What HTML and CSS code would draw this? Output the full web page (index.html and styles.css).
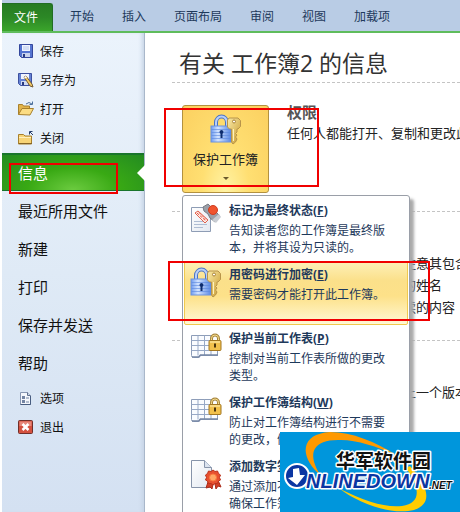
FILE: index.html
```html
<!DOCTYPE html>
<html lang="zh-CN">
<head>
    <meta charset="UTF-8">
    <meta name="viewport" content="width=device-width, initial-scale=1.0">
    <title>工作簿2</title>
    <link rel="stylesheet" href="styles.css">
</head>
<body>
    <!-- shared icons -->
    <svg class="defs" width="0" height="0" aria-hidden="true">
        <defs>
            <linearGradient id="lockBlue" x1="0" y1="0" x2="1" y2="0">
                <stop offset="0" stop-color="#6f9cf0"/>
                <stop offset="0.35" stop-color="#d3e4ff"/>
                <stop offset="1" stop-color="#5a88e4"/>
            </linearGradient>
            <linearGradient id="keyGold" x1="0" y1="0" x2="1" y2="1">
                <stop offset="0" stop-color="#f9eaa8"/>
                <stop offset="1" stop-color="#c99a2c"/>
            </linearGradient>
            <linearGradient id="paper" x1="0" y1="0" x2="1" y2="1">
                <stop offset="0" stop-color="#ffffff"/>
                <stop offset="1" stop-color="#e2e8f1"/>
            </linearGradient>
            <symbol id="lockKey" viewBox="0 0 32 32">
                <path d="M6 13V8.500a5.500 6 0 0 1 11 0V13" fill="none" stroke="#4a72c4" stroke-width="4"/>
                <path d="M6 13V8.500a5.500 6 0 0 1 11 0V13" fill="none" stroke="#b9d0f8" stroke-width="2"/>
                <rect x="1" y="12" width="20" height="16" fill="url(#lockBlue)" stroke="#6b92e0"/>
                <path d="M1.500 15.500h19M1.500 18.500h19M1.500 21.500h19M1.500 24.500h19" stroke="#5a87df" stroke-width="1" opacity="0.6"/>
                <path d="M11.500 16a2 2 0 0 1 1 3.700V24h-2v-4.300a2 2 0 0 1 1-3.700z" fill="#0d2c6e"/>
                <path d="M19 4h9l2.500 2.500v6L28 15h-1v3l-1.500 1.500L27 21l-1.500 2 1.500 2-1.500 3-2.500 2-1.500-2V15h-2L17.500 13V6z" fill="url(#keyGold)" stroke="#b8944a"/>
                <path d="M23.500 15v12" stroke="#fff3bd"/>
                <circle cx="24" cy="7.500" r="1.500" fill="#fff" stroke="#a98336"/>
            </symbol>
            <symbol id="sheetLock" viewBox="0 0 32 32">
                <path d="M1.500 4.500h26v20h-18l-1 2h-5a2 2 0 0 1-2-2z" fill="#fafcff" stroke="#8d9db8"/>
                <path d="M1.500 9.500h26M1.500 14.500h26M1.500 19.500h26M8 4.500v20M14.500 4.500v20M21 4.500v20" fill="none" stroke="#98a9c6"/>
                <path d="M2 26h7l1.500-2H28" fill="none" stroke="#7686a5" stroke-width="1.500"/>
                <path d="M21.500 11V7.500a3.500 3.500 0 0 1 7 0V11" fill="none" stroke="#a8873f" stroke-width="3"/>
                <path d="M21.500 11V7.500a3.500 3.500 0 0 1 7 0V11" fill="none" stroke="#f6dd8e" stroke-width="1"/>
                <rect x="19" y="9.500" width="12" height="10" rx="1" fill="#f2c14c" stroke="#a27621"/>
                <path d="M20 11h10" stroke="#fff0b6"/>
                <path d="M25 12.500v4" stroke="#4b350d" stroke-width="2"/>
            </symbol>
        </defs>
    </svg>

    <div class="window">
        <nav class="ribbon">
            <button class="tab file">文件</button>
            <button class="tab">开始</button>
            <button class="tab">插入</button>
            <button class="tab">页面布局</button>
            <button class="tab">审阅</button>
            <button class="tab">视图</button>
            <button class="tab">加载项</button>
        </nav>

        <div class="backstage">
            <nav class="sidebar">
                <button class="command">
                    <svg width="16" height="16" viewBox="0 0 16 16">
                        <path d="M1.500 1.500h13v13h-11l-2-2z" fill="#5474d0" stroke="#34479c"/>
                        <rect x="4" y="2" width="8" height="6" fill="#f0f5ff"/>
                        <path d="M5 4h6M5 6h6" stroke="#b6c7ea"/>
                        <rect x="4" y="10" width="8" height="4" fill="#c8d3ed"/>
                        <rect x="5" y="11" width="2" height="3" fill="#28397f"/>
                    </svg>
                    保存
                </button>
                <button class="command">
                    <svg width="16" height="16" viewBox="0 0 16 16">
                        <path d="M.5 1.500h13v12h-11l-2-2z" fill="#6583d5" stroke="#3d509f"/>
                        <rect x="3" y="2" width="8" height="5" fill="#f0f5ff"/>
                        <rect x="3" y="9" width="7" height="4" fill="#d0daf1"/>
                        <path d="M4 10h2v3H4z" fill="#28397f"/>
                        <path d="M6 5l2-1 6 8 1 3-3-1z" fill="#f3cb65" stroke="#745b36"/>
                        <path d="M6 5l2-1 1 1.500-2 1z" fill="#fff"/>
                    </svg>
                    另存为
                </button>
                <button class="command">
                    <svg width="16" height="16" viewBox="0 0 16 16">
                        <path d="M.5 13.500v-10h4l1 1.500h6v3" fill="#e2b44c" stroke="#a8802c"/>
                        <path d="M.5 13.500L4 7.500h11.500L12 14z" fill="#fbdc83" stroke="#a8802c"/>
                        <path d="M8 3q3-3 6 0M14.500 .5v3h-3" fill="none" stroke="#4c709c"/>
                    </svg>
                    打开
                </button>
                <button class="command">
                    <svg width="16" height="16" viewBox="0 0 16 16">
                        <path d="M.5 14V4.500h5L7 6h6.500v8z" fill="#f7d477" stroke="#a8802c"/>
                        <path d="M1 7.500h12" stroke="#fff0bd"/>
                        <path d="M1 13.500h13" stroke="#856426"/>
                        <path d="M15 5l-3-3M11.500 4.500V1.500h3" fill="none" stroke="#273f6b"/>
                    </svg>
                    关闭
                </button>

                <button class="page active">信息</button>
                <button class="page">最近所用文件</button>
                <button class="page">新建</button>
                <button class="page">打印</button>
                <button class="page">保存并发送</button>
                <button class="page last">帮助</button>

                <button class="command">
                    <svg width="16" height="16" viewBox="0 0 16 16">
                        <path d="M2.500 2.500h7l3 3v9h-10z" fill="#f4f7fc" stroke="#8796b2"/>
                        <path d="M9.500 2.500v3h3" fill="#cdd8e9" stroke="#60718f"/>
                        <path d="M12.500 6v8.500h-10" fill="none" stroke="#485d80"/>
                        <path d="M4 6h3v3H4zM4 10h3v3H4z" fill="#7384a3"/>
                        <path d="M8 8h3M8 12h3" stroke="#7384a3"/>
                    </svg>
                    选项
                </button>
                <button class="command">
                    <svg width="16" height="16" viewBox="0 0 16 16">
                        <rect x=".5" y="1.500" width="14" height="13" rx="1" fill="#d4513f" stroke="#702e29"/>
                        <path d="M1.500 7V2.500h12V7z" fill="#e78779"/>
                        <path d="M4.500 5l6 6M10.500 5l-6 6" stroke="#fff" stroke-width="2.500"/>
                    </svg>
                    退出
                </button>
            </nav>

            <main class="content">
                <h1>有关 工作簿2 的信息</h1>

                <section class="section">
                    <div class="protect">
                        <button class="protect-button">
                            <svg width="32" height="32"><use href="#lockKey"/></svg>
                            <span>保护工作簿</span>
                            <i class="arrow"></i>
                        </button>

                        <div class="menu">
                            <button class="item">
                                <svg width="32" height="32" viewBox="0 0 32 32">
                                    <path d="M1.500 4.500h19v24h-19z" fill="url(#paper)" stroke="#8e9db5"/>
                                    <path d="M4 18.500h13M4 21.500h13M4 24.500h9" stroke="#aebcd3"/>
                                    <path d="M13 4l5-3 12 12-5 6-5-4-2-4-4-3z" fill="#9a9fa8" stroke="#777b83"/>
                                    <path d="M22 17l7-6 2 3-5 6z" fill="#c9cdd3"/>
                                    <circle cx="23" cy="7" r="4.500" fill="#f0542e" stroke="#d03c20"/>
                                    <path d="M5 10l3-2 10 9-3 3z" fill="#fff0eb" stroke="#e0604c"/>
                                    <path d="M7 10l9 8M9 9.500l7 7" stroke="#e65441" stroke-dasharray="3 1"/>
                                </svg>
                                <span class="text">
                                    <strong>标记为最终状态(<u>F</u>)</strong>
                                    <span>告知读者您的工作簿是最终版本，并将其设为只读的。</span>
                                </span>
                            </button>
                            <button class="item selected">
                                <svg width="32" height="32"><use href="#lockKey"/></svg>
                                <span class="text">
                                    <strong>用密码进行加密(<u>E</u>)</strong>
                                    <span>需要密码才能打开此工作簿。</span>
                                </span>
                            </button>
                            <button class="item">
                                <svg width="32" height="32"><use href="#sheetLock"/></svg>
                                <span class="text">
                                    <strong>保护当前工作表(<u>P</u>)</strong>
                                    <span>控制对当前工作表所做的更改类型。</span>
                                </span>
                            </button>
                            <button class="item">
                                <svg width="32" height="32"><use href="#sheetLock"/></svg>
                                <span class="text">
                                    <strong>保护工作簿结构(<u>W</u>)</strong>
                                    <span>防止对工作簿结构进行不需要的更改，例</span>
                                </span>
                            </button>
                            <button class="item">
                                <svg width="32" height="32" viewBox="0 0 32 32">
                                    <path d="M1.500 1.500h13l7 7v20h-20z" fill="url(#paper)" stroke="#8794aa"/>
                                    <path d="M14.500 1.500v7h7" fill="#dbe3ef" stroke="#8794aa"/>
                                    <path d="M19 20l-3 9 4-1 2 2 2-9zM24 20l2 10 2-3 3 1-4-9z" fill="#d33e25" stroke="#a92b19"/>
                                    <path d="M23 11l2 1.500 2.500-.5 1 2.500 2 1.500-1 2.500 1 2.500-2 1-1 2.500h-2.500L23 26l-2-1.500h-2.500l-1-2.500-2-1 1-2.500-1-2.500 2-1.500 1-2.500 2.500.5z" fill="#e7502f" stroke="#bb321c"/>
                                    <circle cx="23" cy="18.500" r="3.500" fill="#ffa866" stroke="#fa793e"/>
                                </svg>
                                <span class="text">
                                    <strong>添加数字签</strong>
                                    <span>通过添加不<br>确保工作簿</span>
                                </span>
                            </button>
                        </div>
                    </div>
                    <div class="info">
                        <h2>权限</h2>
                        <p>任何人都能打开、复制和更改此</p>
                    </div>
                </section>

                <section class="section">
                    <div class="details">
                        <p>注意其包含</p>
                        <p>的姓名</p>
                        <p>读的内容</p>
                    </div>
                </section>

                <section class="section">
                    <div class="details">
                        <p>上一个版本</p>
                    </div>
                </section>
            </main>
        </div>

        <div class="mark mark-info"></div>
        <div class="mark mark-protect"></div>
        <div class="mark mark-encrypt"></div>

        <svg class="logo" width="180" height="80" viewBox="0 0 180 80" role="img" aria-label="华军软件园 ONLINEDOWN.NET">
            <rect width="180" height="80" fill="#0096dc"/>
            <path d="M38 41C20 24 20 2 50 0c22 0 46 10 66 23C96 14 74 7 58 8 34 8 27 20 39 41z" fill="#ff9900"/>
            <path d="M130 34c20 22 22 38 4 44-24 6-59-9-74-21 25 12 45 19 62 17 20-3 18-19 4-38z" fill="#ffcc00"/>
            <text class="logo-cn" x="56" y="36">华军软件园</text>
            <ellipse cx="17" cy="44" rx="12" ry="12" fill="#0b36a2" stroke="#fff" stroke-width="2"/>
            <path d="M13 37l6-1 1 7h5l-8 10-9-7 5-1z" fill="#fff"/>
            <text class="logo-en" x="26" y="56">NLINEDOWN</text>
            <text class="logo-net" x="149" y="57">.NET</text>
        </svg>
    </div>
</body>
</html>
```

FILE: styles.css
```css
* {
    box-sizing: border-box;
}
body {
    margin: 0;
    background-color: #fff;
    font-family: "Open Sans", "Noto Sans CJK SC", sans-serif;
    font-size: 12px;
    color: #222;
}
button {
    margin: 0;
    padding: 0;
    border: none;
    background: none;
    font: inherit;
    color: inherit;
    text-align: left;
    white-space: nowrap;
}
svg {
    display: block;
    flex: none;
}
h1, h2, p {
    margin: 0;
}
.defs {
    position: absolute;
}
.window {
    position: relative;
    display: flex;
    flex-direction: column;
    height: 100vh;
    padding-left: 2px;
    overflow: hidden;
}

/* ribbon */
.ribbon {
    display: flex;
    flex: none;
    height: 33px;
    padding-top: 3px;
    background-color: #b9cce5;
    border-bottom: 2px solid #5fbc5c;
}
.tab {
    padding: 0 14px;
    line-height: 28px;
    color: #1e395b;
}
.tab.file {
    margin-right: 3px;
    padding: 0 14px 0 12px;
    background: linear-gradient(#277b23, #2c8826 50%, #3ba52b);
    border: 1px solid #216d24;
    border-width: 1px 1px 0 0;
    border-radius: 0 3px 0 0;
    color: #fff;
}

/* left column */
.backstage {
    display: flex;
    flex: 1;
    min-height: 0;
}
.sidebar {
    display: flex;
    flex-direction: column;
    flex: none;
    width: 143px;
    padding-top: 3px;
    background: linear-gradient(#ebf3fc, #dfeaf6 50%, #d4e1f2);
    border-right: 1px solid #a9b7ca;
    box-shadow: inset -4px 0 4px -2px #c6d3e5;
    color: #111;
}
.command {
    display: flex;
    align-items: center;
    gap: 6px;
    height: 29px;
    padding-left: 16px;
}
.page {
    height: 38px;
    padding-left: 16px;
    font-size: 15px;
}
.page.last {
    margin-bottom: 2px;
}
.page.active {
    position: relative;
    margin-top: 1px;
    background: radial-gradient(ellipse at 50% 100%, #6ccb40, #39a914 45%, #238b21);
    border-top: 2px solid #19752c;
    border-bottom: 1px solid #19752c;
    color: #fff;
}
.page.active::after {
    content: "";
    position: absolute;
    top: 10px;
    right: -1px;
    border: 8px solid transparent;
    border-left-width: 0;
    border-right-color: #fff;
}

/* info page */
.content {
    flex: 1;
    min-width: 0;
    padding-left: 27px;
    overflow: hidden;
    white-space: nowrap;
}
h1 {
    height: 50px;
    padding: 14px 0 0 7px;
    border-bottom: 1px dashed #c4c4c4;
    font-size: 23px;
    font-weight: normal;
    line-height: 32px;
    color: #333;
}
.section {
    display: flex;
    gap: 18px;
    height: 129px;
    padding: 22px 0 18px 10px;
    border-bottom: 1px dashed #c4c4c4;
}
.section:last-child {
    border-bottom: none;
}
.info h2 {
    margin-bottom: 3px;
    font-size: 15px;
    line-height: 14px;
    color: #555;
}
.section p {
    font-size: 13px;
    line-height: 22px;
}
.details {
    padding: 18px 0 0 221px;
}
.protect {
    position: relative;
    flex: none;
}
.protect-button {
    display: flex;
    flex-direction: column;
    align-items: center;
    width: 87px;
    height: 88px;
    padding-top: 8px;
    background: radial-gradient(ellipse at 50% 100%, #fff3a5, #ffdf72 40%, #fbd060);
    border: 1px solid #b3913f;
    border-radius: 3px;
    font-size: 13px;
    line-height: 26px;
}
.arrow {
    margin-top: 5px;
    border: 3px solid transparent;
    border-top-color: #6b5a2d;
    border-bottom-width: 0;
}

/* drop-down menu */
.menu {
    position: absolute;
    top: 90px;
    left: 0;
    z-index: 1;
    width: 228px;
    padding: 1px;
    background-color: #fff;
    border: 1px solid #9a9fa8;
    border-radius: 3px;
    box-shadow: 4px 4px 3px #aaa;
    color: #1e395b;
}
.item {
    display: flex;
    gap: 7px;
    width: 100%;
    height: 64px;
    padding: 5px 16px 0 5px;
    border: 1px solid transparent;
    white-space: normal;
}
.item.selected {
    background: linear-gradient(#fdf0b8, #fbe08a 30%, #fde189 55%, #fff8d5);
    border-color: #f0c94e;
    border-radius: 2px;
}
.text {
    display: flex;
    flex-direction: column;
    gap: 3px;
    line-height: 17px;
}
.text strong {
    line-height: 16px;
}

/* red frames */
.mark {
    position: absolute;
    z-index: 2;
    border: 2px solid #f00000;
}
.mark-info {
    top: 163px;
    left: 9px;
    width: 109px;
    height: 31px;
}
.mark-protect {
    top: 108px;
    left: 164px;
    width: 155px;
    height: 79px;
}
.mark-encrypt {
    top: 261px;
    left: 168px;
    width: 262px;
    height: 60px;
}

/* site logo */
.logo {
    position: absolute;
    right: 0;
    bottom: 0;
    z-index: 3;
}
.logo text {
    stroke: #fff;
    stroke-width: 3px;
    stroke-linejoin: round;
    paint-order: stroke;
}
.logo-cn {
    font-size: 19px;
    font-weight: bold;
    fill: #111;
}
.logo-en {
    font-family: "Liberation Sans", Arial, sans-serif;
    font-size: 20px;
    font-weight: bold;
    font-style: italic;
    fill: #0b36a2;
}
.logo .logo-net {
    font-family: "Liberation Sans", Arial, sans-serif;
    font-size: 10px;
    font-weight: bold;
    font-style: italic;
    fill: #111;
    stroke-width: 2px;
}
```
